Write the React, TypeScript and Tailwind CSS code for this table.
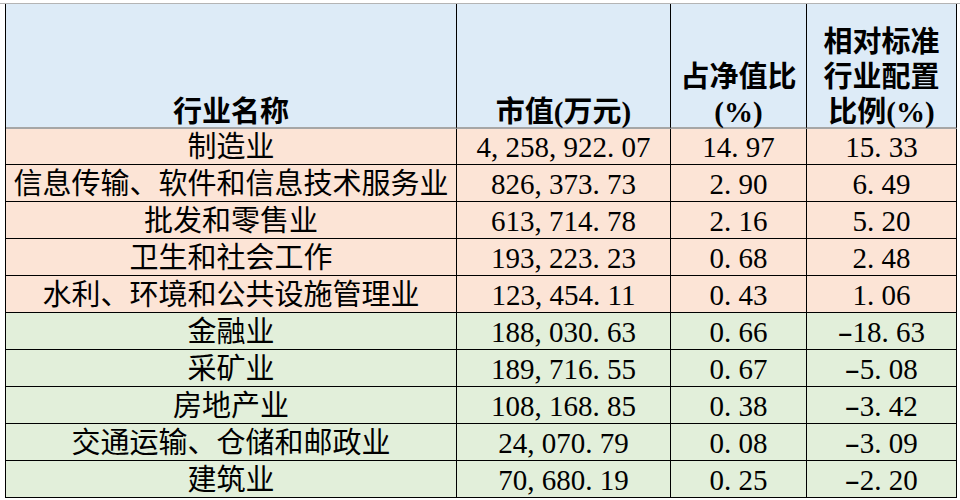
const orangeRows = [
  { name: "制造业", value: "4,258,922.07", ratio: "14.97", rel: "15.33" },
  { name: "信息传输、软件和信息技术服务业", value: "826,373.73", ratio: "2.90", rel: "6.49" },
  { name: "批发和零售业", value: "613,714.78", ratio: "2.16", rel: "5.20" },
  { name: "卫生和社会工作", value: "193,223.23", ratio: "0.68", rel: "2.48" },
  { name: "水利、环境和公共设施管理业", value: "123,454.11", ratio: "0.43", rel: "1.06" },
];

const greenRows = [
  { name: "金融业", value: "188,030.63", ratio: "0.66", rel: "-18.63" },
  { name: "采矿业", value: "189,716.55", ratio: "0.67", rel: "-5.08" },
  { name: "房地产业", value: "108,168.85", ratio: "0.38", rel: "-3.42" },
  { name: "交通运输、仓储和邮政业", value: "24,070.79", ratio: "0.08", rel: "-3.09" },
  { name: "建筑业", value: "70,680.19", ratio: "0.25", rel: "-2.20" },
];

// SimSun-style wide punctuation: pad commas/periods, stretch the minus
function Num({ text }: { text: string }) {
  return (
    <span>
      {text.split("").map((ch, i) => {
        if (ch === "," || ch === ".") {
          return (
            <span key={i} className="pr-[0.25em]">
              {ch}
            </span>
          );
        }
        if (ch === "-") {
          return (
            <span key={i} className="inline-block w-[0.5em] scale-x-[1.6] text-center">
              {ch}
            </span>
          );
        }
        return <span key={i}>{ch}</span>;
      })}
    </span>
  );
}

const font = "font-['Liberation_Serif','Noto_Sans_CJK_SC',serif]";

function Row({
  row,
  bg,
  first,
}: {
  row: { name: string; value: string; ratio: string; rel: string };
  bg: string;
  first?: boolean;
}) {
  const h = first ? "h-[36px]" : "h-[37px]";
  const cell = `${h} ${bg} flex items-center justify-center pt-[3px] border-r border-b border-black whitespace-nowrap overflow-visible`;
  return (
    <>
      <div className={cell}>{row.name}</div>
      <div className={cell}>
        <Num text={row.value} />
      </div>
      <div className={cell}>
        <Num text={row.ratio} />
      </div>
      <div className={cell}>
        <Num text={row.rel} />
      </div>
    </>
  );
}

export default function App() {
  const head =
    "h-[125px] bg-[#ddebf7] flex items-end justify-center text-center border-r border-black border-b-2 border-b-[#a6a6a6] font-bold leading-[35px]";
  return (
    <div className={`w-[960px] h-[500px] bg-white pt-[3px] text-black text-[29px] ${font}`}>
      <div className="border-t border-[#b4b4b4]">
        <div className="ml-[5px] border-l border-black grid grid-cols-[451px_214px_136px_150px] w-[952px]">
          <div className={head}>
            <div className="translate-y-[3px]">行业名称</div>
          </div>
          <div className={head}>
            <div className="translate-y-[3px]">市值(万元)</div>
          </div>
          <div className={head}>
            <div className="translate-y-[3px]">
              占净值比
              <br />
              (%)
            </div>
          </div>
          <div className={head}>
            <div className="translate-y-[3px]">
              相对标准
              <br />
              行业配置
              <br />
              比例(%)
            </div>
          </div>
          {orangeRows.map((r, i) => (
            <Row key={r.name} row={r} bg="bg-[#fce4d6]" first={i === 0} />
          ))}
          {greenRows.map((r) => (
            <Row key={r.name} row={r} bg="bg-[#e2efda]" />
          ))}
        </div>
      </div>
    </div>
  );
}
